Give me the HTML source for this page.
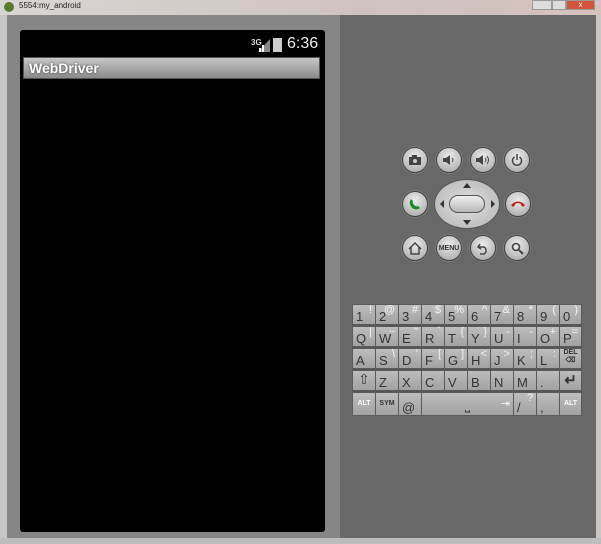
<!DOCTYPE html>
<html><head><meta charset="utf-8"><style>
*{margin:0;padding:0;box-sizing:border-box}
body{width:601px;height:544px;overflow:hidden;background:#c9c6c6;font-family:"Liberation Sans",sans-serif;position:relative}
.a{position:absolute}
.btn{position:absolute;width:26px;height:26px;border-radius:50%;background:radial-gradient(circle at 50% 35%,#ececec,#b8b8b8 70%,#8e8e8e);border:1px solid #444;box-shadow:0 0 0 1px #7a7a7a;display:flex;align-items:center;justify-content:center}
.kb{position:absolute;left:352px;top:304px;width:230px;height:112px;background:#555}
.k{position:absolute;height:21px;background:linear-gradient(#bdbdbd,#a2a2a2);border:1px solid #5a5a5a;color:#333;font-size:13px}
.k .m{position:absolute;left:3px;bottom:0px}
.k .s{position:absolute;right:3px;top:-1px;font-size:11px;color:#f2f2f2}
</style></head><body>
<div class="a" style="left:0;top:0;width:601px;height:15px;background:linear-gradient(90deg,#d8d6d4,#cfc3c0 60%,#d5c2bd)"></div>
<div class="a" style="left:4px;top:2px;width:10px;height:10px;border-radius:50%;background:#5a7a2a"></div>
<div class="a" style="left:19px;top:1px;font-size:8px;color:#222">5554:my_android</div>
<div class="a" style="left:532px;top:0;width:20px;height:10px;background:#ddd;border:1px solid #999"></div>
<div class="a" style="left:552px;top:0;width:14px;height:10px;background:#ddd;border:1px solid #999"></div>
<div class="a" style="left:566px;top:0;width:29px;height:10px;background:#d2533c;border:1px solid #999;color:#fff;font-size:8px;text-align:center;line-height:8px">x</div>
<div class="a" style="left:7px;top:15px;width:333px;height:523px;background:#868686"></div>
<div class="a" style="left:340px;top:15px;width:256px;height:523px;background:#696868"></div>
<div class="a" style="left:20px;top:30px;width:305px;height:502px;background:#000;border-radius:3px"></div>
<div class="a" style="left:251px;top:38px;font-size:8px;color:#ddd;font-weight:bold">3G</div>
<svg class="a" style="left:258px;top:39px" width="12" height="13"><polygon points="0,13 12,0 12,13" fill="#888"/><rect x="1" y="9" width="2" height="4" fill="#fff"/><rect x="4" y="6" width="2" height="7" fill="#fff"/></svg>
<div class="a" style="left:273px;top:38px;width:9px;height:14px;background:#ccc"></div>
<div class="a" style="left:287px;top:35px;font-size:16px;color:#eee">6:36</div>
<div class="a" style="left:23px;top:57px;width:297px;height:22px;background:linear-gradient(#c6c6c6,#8a8a8a);border:1px solid #555"></div>
<div class="a" style="left:29px;top:60px;font-size:14px;font-weight:bold;color:#fff;text-shadow:0 0 2px #333">WebDriver</div>

<div class="btn" style="left:402px;top:147px"><svg width="12" height="10"><rect x="0" y="2" width="12" height="8" fill="#444"/><rect x="3" y="0" width="5" height="3" fill="#444"/><circle cx="6" cy="6" r="2" fill="#ccc"/></svg></div>
<div class="btn" style="left:436px;top:147px"><svg width="12" height="10"><polygon points="0,3 3,3 7,0 7,10 3,7 0,7" fill="#444"/><path d="M9 3Q11 5 9 7" stroke="#444" fill="none"/></svg></div>
<div class="btn" style="left:470px;top:147px"><svg width="14" height="10"><polygon points="0,3 3,3 7,0 7,10 3,7 0,7" fill="#444"/><path d="M9 3Q11 5 9 7M11 1Q14 5 11 9" stroke="#444" fill="none"/></svg></div>
<div class="btn" style="left:504px;top:147px"><svg width="12" height="12"><path d="M3.5 3A4.5 4.5 0 1 0 8.5 3M6 0V6" stroke="#444" stroke-width="1.5" fill="none"/></svg></div>
<div class="btn" style="left:402px;top:191px"><svg width="14" height="14"><path d="M3 2Q0 6 4 11Q8 14 12 11L10 9Q8 10 6 8Q4 6 5 4Z" fill="#1a8a2a"/></svg></div>
<div class="btn" style="left:505px;top:191px"><svg width="16" height="10"><path d="M1 6Q8 -1 15 6L13 8L11 6L11 5Q8 3 5 5L5 6L3 8Z" fill="#c81a1a"/></svg></div>
<div class="a" style="left:434px;top:179px;width:66px;height:50px;border-radius:50%;background:radial-gradient(#e4e4e4,#b0b0b0);border:1px solid #555"></div>
<div class="a" style="left:449px;top:195px;width:36px;height:18px;border-radius:9px;background:linear-gradient(#f0f0f0,#b8b8b8);border:1px solid #555"></div>
<div class="a" style="left:463px;top:183px;width:0;height:0;border:4px solid transparent;border-bottom:5px solid #333;border-top:0"></div>
<div class="a" style="left:463px;top:220px;width:0;height:0;border:4px solid transparent;border-top:5px solid #333;border-bottom:0"></div>
<div class="a" style="left:440px;top:200px;width:0;height:0;border:4px solid transparent;border-right:4px solid #333;border-left:0"></div>
<div class="a" style="left:491px;top:200px;width:0;height:0;border:4px solid transparent;border-left:4px solid #333;border-right:0"></div>
<div class="btn" style="left:402px;top:235px"><svg width="14" height="13"><path d="M1 7L7 1L13 7M3 5V12H11V5" stroke="#444" stroke-width="1.5" fill="none"/></svg></div>
<div class="btn" style="left:436px;top:235px;font-size:7px;font-weight:bold;color:#333">MENU</div>
<div class="btn" style="left:470px;top:235px"><svg width="12" height="13"><path d="M3 2L1 5L4 7M1 5H7A4 4 0 0 1 7 12H3" stroke="#444" stroke-width="1.5" fill="none"/></svg></div>
<div class="btn" style="left:504px;top:235px"><svg width="13" height="13"><circle cx="5" cy="5" r="3.5" stroke="#444" stroke-width="1.6" fill="none"/><path d="M8 8L12 12" stroke="#444" stroke-width="2"/></svg></div>

<div class="kb">
<div class="k" style="left:0;top:0;width:24px"><span class="m">1</span><span class="s">!</span></div>
<div class="k" style="left:23px;top:0;width:24px"><span class="m">2</span><span class="s">@</span></div>
<div class="k" style="left:46px;top:0;width:24px"><span class="m">3</span><span class="s">#</span></div>
<div class="k" style="left:69px;top:0;width:24px"><span class="m">4</span><span class="s">$</span></div>
<div class="k" style="left:92px;top:0;width:24px"><span class="m">5</span><span class="s">%</span></div>
<div class="k" style="left:115px;top:0;width:24px"><span class="m">6</span><span class="s">^</span></div>
<div class="k" style="left:138px;top:0;width:24px"><span class="m">7</span><span class="s">&amp;</span></div>
<div class="k" style="left:161px;top:0;width:24px"><span class="m">8</span><span class="s">*</span></div>
<div class="k" style="left:184px;top:0;width:24px"><span class="m">9</span><span class="s">(</span></div>
<div class="k" style="left:207px;top:0;width:23px"><span class="m">0</span><span class="s">)</span></div>
<div class="k" style="left:0;top:22px;width:24px"><span class="m">Q</span><span class="s">|</span></div>
<div class="k" style="left:23px;top:22px;width:24px"><span class="m">W</span><span class="s">~</span></div>
<div class="k" style="left:46px;top:22px;width:24px"><span class="m">E</span><span class="s">"</span></div>
<div class="k" style="left:69px;top:22px;width:24px"><span class="m">R</span><span class="s">`</span></div>
<div class="k" style="left:92px;top:22px;width:24px"><span class="m">T</span><span class="s">{</span></div>
<div class="k" style="left:115px;top:22px;width:24px"><span class="m">Y</span><span class="s">}</span></div>
<div class="k" style="left:138px;top:22px;width:24px"><span class="m">U</span><span class="s">-</span></div>
<div class="k" style="left:161px;top:22px;width:24px"><span class="m">I</span><span class="s">-</span></div>
<div class="k" style="left:184px;top:22px;width:24px"><span class="m">O</span><span class="s">+</span></div>
<div class="k" style="left:207px;top:22px;width:23px"><span class="m">P</span><span class="s">=</span></div>
<div class="k" style="left:0;top:44px;width:24px"><span class="m">A</span></div>
<div class="k" style="left:23px;top:44px;width:24px"><span class="m">S</span><span class="s">\</span></div>
<div class="k" style="left:46px;top:44px;width:24px"><span class="m">D</span><span class="s">'</span></div>
<div class="k" style="left:69px;top:44px;width:24px"><span class="m">F</span><span class="s">[</span></div>
<div class="k" style="left:92px;top:44px;width:24px"><span class="m">G</span><span class="s">]</span></div>
<div class="k" style="left:115px;top:44px;width:24px"><span class="m">H</span><span class="s">&lt;</span></div>
<div class="k" style="left:138px;top:44px;width:24px"><span class="m">J</span><span class="s">&gt;</span></div>
<div class="k" style="left:161px;top:44px;width:24px"><span class="m">K</span><span class="s">;</span></div>
<div class="k" style="left:184px;top:44px;width:24px"><span class="m">L</span><span class="s">:</span></div>
<div class="k" style="left:207px;top:44px;width:23px;font-size:7px;font-weight:bold;text-align:center">DEL<br>⌫</div>
<div class="k" style="left:0;top:66px;width:24px;text-align:center;font-size:14px">⇧</div>
<div class="k" style="left:23px;top:66px;width:24px"><span class="m">Z</span></div>
<div class="k" style="left:46px;top:66px;width:24px"><span class="m">X</span></div>
<div class="k" style="left:69px;top:66px;width:24px"><span class="m">C</span></div>
<div class="k" style="left:92px;top:66px;width:24px"><span class="m">V</span></div>
<div class="k" style="left:115px;top:66px;width:24px"><span class="m">B</span></div>
<div class="k" style="left:138px;top:66px;width:24px"><span class="m">N</span></div>
<div class="k" style="left:161px;top:66px;width:24px"><span class="m">M</span></div>
<div class="k" style="left:184px;top:66px;width:24px"><span class="m">.</span></div>
<div class="k" style="left:207px;top:66px;width:23px;text-align:center;font-size:15px;font-weight:bold">↵</div>
<div class="k" style="left:0;top:88px;width:24px;height:24px;font-size:7px;font-weight:bold;line-height:22px;text-align:center;color:#fff">ALT</div>
<div class="k" style="left:23px;top:88px;width:24px;height:24px;font-size:7px;font-weight:bold;line-height:22px;text-align:center">SYM</div>
<div class="k" style="left:46px;top:88px;width:24px;height:24px"><span class="m">@</span></div>
<div class="k" style="left:69px;top:88px;width:93px;height:24px;text-align:center;line-height:24px">⎵<span class="s">⇥</span></div>
<div class="k" style="left:161px;top:88px;width:24px;height:24px"><span class="m">/</span><span class="s">?</span></div>
<div class="k" style="left:184px;top:88px;width:24px;height:24px"><span class="m">,</span></div>
<div class="k" style="left:207px;top:88px;width:23px;height:24px;font-size:7px;font-weight:bold;line-height:22px;text-align:center;color:#fff">ALT</div>
</div>
<div class="a" style="left:0;top:538px;width:601px;height:6px;background:#bdbdbd"></div>
</body></html>
